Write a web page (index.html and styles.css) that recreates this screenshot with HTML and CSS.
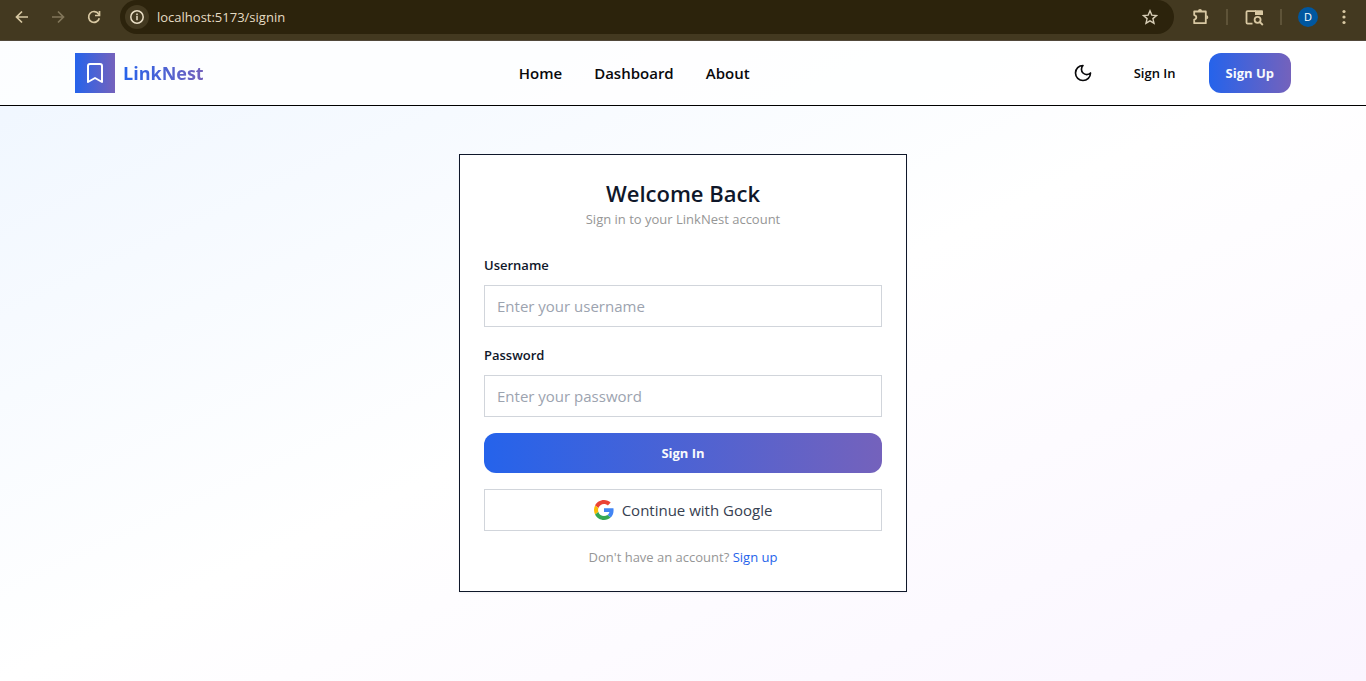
FILE: index.html
```html
<!DOCTYPE html>
<html lang="en">
<head>
<meta charset="utf-8">
<meta name="viewport" content="width=device-width, initial-scale=1">
<title>LinkNest - Sign In</title>
<link rel="stylesheet" href="styles.css">
</head>
<body>
<div class="browser-bar">
  <button class="tool" type="button" aria-label="Back">
    <svg width="16" height="16" viewBox="0 0 16 16" fill="none" stroke="currentColor" stroke-width="1.7"><path d="M14 8H3M8 2.5 2.5 8 8 13.5"/></svg>
  </button>
  <button class="tool tool-disabled" type="button" aria-label="Forward">
    <svg width="16" height="16" viewBox="0 0 16 16" fill="none" stroke="currentColor" stroke-width="1.7"><path d="M2 8h11M8 2.5 13.5 8 8 13.5"/></svg>
  </button>
  <button class="tool" type="button" aria-label="Reload">
    <svg width="16" height="16" viewBox="0 0 16 16" fill="none" stroke="currentColor" stroke-width="1.7"><path d="M13.3 9.2A5.4 5.4 0 1 1 12.600 5L13.5 6.300"/><path d="M13.5 2v4.5H9"/></svg>
  </button>
  <div class="address">
    <button class="site-info" type="button" aria-label="View site information">
      <svg width="16" height="16" viewBox="0 0 16 16" fill="none" stroke="currentColor" stroke-width="1.5"><circle cx="8" cy="8" r="6.2"/><path d="M8 7v4.3M8 4.6v1.6"/></svg>
    </button>
    <input class="url" type="text" value="localhost:5173/signin" aria-label="Address">
    <button class="star" type="button" aria-label="Bookmark this tab">
      <svg width="16" height="16" viewBox="0 0 16 16" fill="none" stroke="currentColor" stroke-width="1.4"><path d="m8 1.800 1.800 4.300 4.700.4-3.600 3.100 1.100 4.600L8 11.800l-4 2.400 1.100-4.600L1.500 6.500l4.700-.4z"/></svg>
    </button>
  </div>
  <div class="extensions">
    <button class="tool" type="button" aria-label="Extensions">
      <svg width="18" height="18" viewBox="0 0 18 18"><path d="M3.200 3.500h11.600v11.700H3.200v-3.600c2.800-.6 2.800-3.900 0-4.500z" fill="none" stroke="currentColor" stroke-width="1.800" stroke-linejoin="round"/><path d="M7 3a2 2 0 0 1 4 0zM15.300 7.300a2 2 0 0 1 0 4z" fill="currentColor"/></svg>
    </button>
    <span class="divider"></span>
    <button class="tool" type="button" aria-label="Search tabs">
      <svg width="20" height="18" viewBox="0 0 20 18" fill="none" stroke="currentColor" stroke-width="1.8"><path d="M8.500 15.600H3.500a1 1 0 0 1-1-1V4.100a1 1 0 0 1 1-1H12"/><path d="M11 2.200h7a1 1 0 0 1 1 1V7h-8z" fill="currentColor" stroke="none"/><circle cx="13.600" cy="11.800" r="3"/><path d="m15.800 14 3 3"/></svg>
    </button>
    <span class="divider"></span>
    <button class="profile" type="button" aria-label="Profile">D</button>
    <button class="tool" type="button" aria-label="Menu">
      <svg width="16" height="16" viewBox="0 0 16 16" fill="currentColor"><circle cx="8" cy="2.500" r="1.600"/><circle cx="8" cy="8" r="1.600"/><circle cx="8" cy="13.500" r="1.600"/></svg>
    </button>
  </div>
</div>

<div class="page">
  <header class="navbar">
    <div class="navbar-inner">
      <a class="brand" href="#">
        <span class="brand-mark">
          <svg width="24" height="24" viewBox="0 0 24 24" fill="none" stroke="currentColor" stroke-width="2" stroke-linecap="round" stroke-linejoin="round"><path d="m19 21-7-4-7 4V5a2 2 0 0 1 2-2h10a2 2 0 0 1 2 2v16z"/></svg>
        </span>
        <span class="brand-name">LinkNest</span>
      </a>
      <nav class="nav-links">
        <a href="#">Home</a>
        <a href="#">Dashboard</a>
        <a href="#">About</a>
      </nav>
      <div class="nav-actions">
        <button class="theme-toggle" type="button" aria-label="Toggle theme">
          <svg width="20" height="20" viewBox="0 0 24 24" fill="none" stroke="currentColor" stroke-width="2" stroke-linecap="round" stroke-linejoin="round"><path d="M12 3a6 6 0 0 0 9 9 9 9 0 1 1-9-9Z"/></svg>
        </button>
        <a class="btn btn-ghost" href="#">Sign In</a>
        <a class="btn btn-primary" href="#">Sign Up</a>
      </div>
    </div>
  </header>

  <main class="content">
    <section class="card">
      <div class="card-header">
        <h1>Welcome Back</h1>
        <p class="muted">Sign in to your LinkNest account</p>
      </div>
      <form class="form">
        <div class="field">
          <label for="username">Username</label>
          <input id="username" type="text" placeholder="Enter your username">
        </div>
        <div class="field">
          <label for="password">Password</label>
          <input id="password" type="password" placeholder="Enter your password">
        </div>
        <button class="btn btn-primary" type="submit">Sign In</button>
        <button class="google" type="button">
          <svg width="20" height="20" viewBox="0 0 48 48"><path fill="#EA4335" d="M24 9.500c3.540 0 6.710 1.220 9.210 3.600l6.850-6.850C35.900 2.380 30.470 0 24 0 14.620 0 6.510 5.380 2.560 13.220l7.980 6.190C12.430 13.720 17.740 9.500 24 9.500z"/><path fill="#4285F4" d="M46.980 24.550c0-1.570-.15-3.090-.38-4.550H24v9.020h12.940c-.58 2.960-2.260 5.480-4.780 7.180l7.730 6c4.510-4.180 7.090-10.360 7.090-17.650z"/><path fill="#FBBC05" d="M10.530 28.590c-.48-1.450-.76-2.990-.76-4.590s.27-3.140.76-4.590l-7.980-6.190C.92 16.460 0 20.120 0 24c0 3.880.92 7.540 2.560 10.780l7.970-6.190z"/><path fill="#34A853" d="M24 48c6.480 0 11.930-2.130 15.890-5.810l-7.730-6c-2.150 1.450-4.920 2.300-8.160 2.300-6.260 0-11.570-4.220-13.470-9.910l-7.980 6.190C6.510 42.620 14.620 48 24 48z"/></svg>
          <span>Continue with Google</span>
        </button>
        <p class="muted">Don't have an account? <a href="#">Sign up</a></p>
      </form>
    </section>
  </main>
</div>
</body>
</html>
```
FILE: styles.css
```css
*, *::before, *::after { box-sizing: border-box; }

:root {
  --accent: linear-gradient(to right, #2563eb, #7462bc);
  --ink: #0f172a;
  --chrome-icon: #d8c8a2;
}

body {
  margin: 0;
  min-height: 100vh;
  display: flex;
  flex-direction: column;
  font-family: "Segoe UI", "Open Sans", "Noto Sans", sans-serif;
  font-size: 15px;
  line-height: 24px;
  color: var(--ink);
}

a { color: inherit; text-decoration: none; }
button, input { font: inherit; }
button { border: 0; padding: 0; background: none; color: inherit; cursor: pointer; }
svg { display: block; flex: none; }
h1, p { margin: 0; }

/* Browser toolbar */
.browser-bar {
  display: flex;
  align-items: center;
  gap: 16px;
  padding: 0 12px 6px;
  height: 41px;
  background: #433920;
  border-bottom: 1px solid #51483a;
  color: var(--chrome-icon);
}
.tool { display: grid; place-items: center; width: 20px; height: 20px; flex: none; }
.tool-disabled { color: #82765a; }
.address {
  flex: 1;
  display: flex;
  align-items: center;
  gap: 8px;
  height: 34px;
  padding: 0 16px 0 5px;
  border-radius: 17px;
  background: #2c230c;
}
.site-info {
  display: grid;
  place-items: center;
  width: 24px;
  height: 24px;
  border-radius: 50%;
  background: #433920;
  color: #eadfc6;
}
.url {
  flex: 1;
  min-width: 0;
  height: 24px;
  padding: 0;
  border: 0;
  outline: 0;
  background: none;
  color: #e6dcc4;
  font-size: 13px;
}
.star { color: #d6ccb5; }
.extensions { display: flex; align-items: center; gap: 16px; }
.divider { width: 2px; height: 16px; background: #5e5338; }
.profile {
  width: 20px;
  height: 20px;
  border-radius: 50%;
  background: #0057a0;
  color: #fff;
  font-size: 11px;
  line-height: 20px;
}

/* Page shell */
.page {
  flex: 1;
  display: flex;
  flex-direction: column;
  background: linear-gradient(to bottom right, #eff6ff, #fff, #faf5ff);
}
.navbar {
  background: rgba(255, 255, 255, 0.8);
  border-bottom: 1px solid #000;
  color: #09090b;
}
.navbar-inner {
  display: flex;
  align-items: center;
  justify-content: space-between;
  max-width: 1280px;
  height: 64px;
  margin: 0 auto;
  padding: 0 32px;
}
.brand { display: flex; align-items: center; gap: 8px; }
.brand-mark {
  display: grid;
  place-items: center;
  width: 40px;
  height: 40px;
  background: var(--accent);
  color: #fff;
}
.brand-name {
  font-size: 18px;
  font-weight: 700;
  line-height: 28px;
  background: var(--accent);
  -webkit-background-clip: text;
  background-clip: text;
  color: transparent;
}
.nav-links { display: flex; gap: 32px; font-weight: 600; }
.nav-actions { display: flex; align-items: center; gap: 16px; }
.theme-toggle { padding: 8px; }

.btn {
  display: inline-flex;
  align-items: center;
  justify-content: center;
  height: 40px;
  padding: 0 17px;
  border-radius: 12px;
  font-size: 13px;
  font-weight: 600;
  line-height: 20px;
}
.btn-primary { background: var(--accent); color: #f8fafc; font-weight: 700; }

/* Sign-in card */
.content {
  flex: 1;
  display: flex;
  justify-content: center;
  align-items: flex-start;
  padding: 48px 16px;
}
.card {
  width: 100%;
  max-width: 448px;
  padding: 24px;
  background: #fff;
  border: 1px solid var(--ink);
  box-shadow: 0 1px 2px rgba(0, 0, 0, 0.05);
}
.card-header {
  display: flex;
  flex-direction: column;
  gap: 2px;
  padding-bottom: 24px;
  text-align: center;
}
h1 { font-size: 22px; font-weight: 600; line-height: 28px; }
.muted { color: #969696; font-size: 13px; line-height: 20px; text-align: center; }
.muted a { color: #2563eb; }
.form { display: flex; flex-direction: column; gap: 16px; }
.field { display: flex; flex-direction: column; gap: 8px; }
.field label { font-size: 13px; font-weight: 600; }
.field input {
  width: 100%;
  height: 42px;
  padding: 8px 12px;
  border: 1px solid #d1d5db;
  border-radius: 0;
  background: #fff;
  color: var(--ink);
}
.field input::placeholder { color: #9ca3af; opacity: 1; }
.google {
  display: flex;
  align-items: center;
  justify-content: center;
  gap: 8px;
  height: 42px;
  border: 1px solid #d1d5db;
  background: #fff;
  color: #374151;
}
```
